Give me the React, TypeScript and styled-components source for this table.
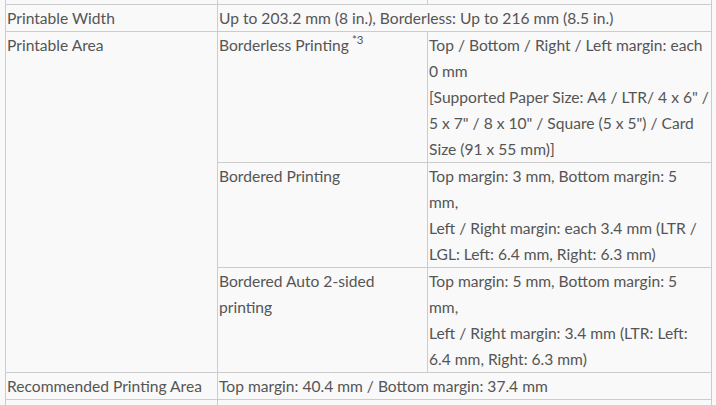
import React from "react";
import styled, { createGlobalStyle } from "styled-components";

const GlobalStyle = createGlobalStyle`
  html, body {
    margin: 0;
    padding: 0;
    background: #f9f9f9;
  }
  body {
    font-family: Lato, "Open Sans", sans-serif;
    color: #555;
    overflow: hidden;
  }
`;

const Page = styled.div`
  padding-left: 5px;
`;

const SpecTable = styled.table`
  border-collapse: separate;
  border-spacing: 0;
  table-layout: fixed;
  width: 706px;
  border-left: 1px solid #ccc;
  font-size: 15.6px;
  line-height: 26px;
`;

const Col = styled.col<{ $w: number }>`
  width: ${(p) => p.$w}px;
`;

const Cell = styled.td<{ $h?: number }>`
  box-sizing: border-box;
  padding: 0 1px;
  vertical-align: top;
  text-align: left;
  border-right: 1px solid #ccc;
  border-bottom: 1px solid #ccc;
  height: ${(p) => (p.$h ? `${p.$h}px` : "auto")};
`;

const Note = styled.sup`
  font-size: 11.5px;
  line-height: 0;
  margin-left: 3px;
  vertical-align: 7px;
`;

export default function App() {
  return (
    <Page>
      <GlobalStyle />
      <SpecTable>
        <colgroup>
          <Col $w={212} />
          <Col $w={210} />
          <Col $w={284} />
        </colgroup>
        <tbody>
          <tr>
            <Cell $h={5} />
            <Cell $h={5} />
            <Cell $h={5} />
          </tr>
          <tr>
            <Cell>Printable Width</Cell>
            <Cell colSpan={2}>Up to 203.2 mm (8 in.), Borderless: Up to 216 mm (8.5 in.)</Cell>
          </tr>
          <tr>
            <Cell rowSpan={3}>Printable Area</Cell>
            <Cell>
              Borderless Printing<Note>*3</Note>
            </Cell>
            <Cell>
              Top / Bottom / Right / Left margin: each 0 mm
              <br />
              [Supported Paper Size: A4 / LTR/ 4 x 6" / 5 x 7" / 8 x 10" / Square (5 x 5") / Card Size (91 x 55 mm)]
            </Cell>
          </tr>
          <tr>
            <Cell>Bordered Printing</Cell>
            <Cell>
              Top margin: 3 mm, Bottom margin: 5 mm,
              <br />
              Left / Right margin: each 3.4 mm (LTR / LGL: Left: 6.4 mm, Right: 6.3 mm)
            </Cell>
          </tr>
          <tr>
            <Cell>Bordered Auto 2-sided printing</Cell>
            <Cell>
              Top margin: 5 mm, Bottom margin: 5 mm,
              <br />
              Left / Right margin: 3.4 mm (LTR: Left: 6.4 mm, Right: 6.3 mm)
            </Cell>
          </tr>
          <tr>
            <Cell>Recommended Printing Area</Cell>
            <Cell colSpan={2}>Top margin: 40.4 mm / Bottom margin: 37.4 mm</Cell>
          </tr>
          <tr>
            <Cell $h={6} />
            <Cell colSpan={2} $h={6} />
          </tr>
        </tbody>
      </SpecTable>
    </Page>
  );
}
